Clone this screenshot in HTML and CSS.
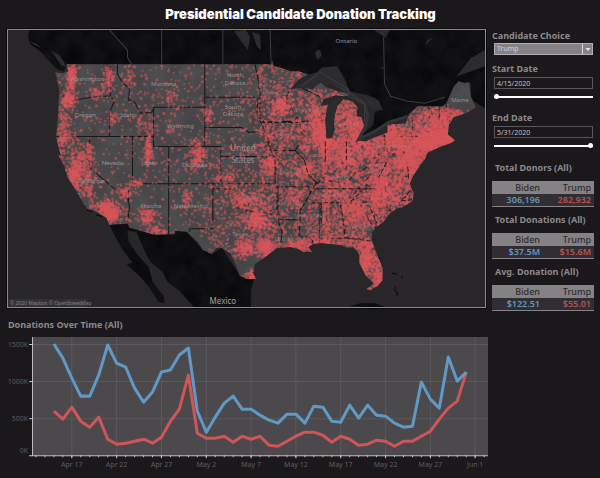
FILE: index.html
```html
<!DOCTYPE html>
<html lang="en">
<head>
<meta charset="utf-8">
<title>Presidential Candidate Donation Tracking</title>
<link rel="stylesheet" href="styles.css">
</head>
<body>
<h1 class="title">Presidential Candidate Donation Tracking</h1>
<main class="dashboard">
  <section class="map-panel" aria-label="Donation map">
    <svg class="map" viewBox="9 31 475 276" role="img" aria-label="Map of donations across the United States">
      <defs>
        <path id="usa" d="M67 65H271L272 61L274 67L282 69L290 72L298 72L308 75L298 81L290 90L302 88L312 90L320 83L326 88L340 93L352 95L344 97L335 96L330 98L323 100L321 107L328 105L325 120L326 133L328 139L332 138L334 130L334 117L337 107L343 100L352 102L357 108L356 117L361 118L364 127L361 137L357 141L365 142L374 138L387 133V125L405 124L408 115L417 107H442L446 103L453 87L458 82L463 84L468 83L470 97L475 108L467 113L453 118L448 125L447 135L452 139L454 141L449 144L440 147L427 153L424 160L418 168L412 177L409 184L413 193L412 201L403 207L396 209L390 213L383 222L375 228L371 233L371 240L376 253L382 268L382 280L377 286L370 290L366 289L373 284L365 275L359 263V255L353 247L347 248L340 245L320 243L313 244L308 247L312 252L303 252L298 249L290 247L277 248L265 257L255 264L253 273L256 279L247 279L240 276L235 263L230 253L222 248H216L212 254L203 250L198 242L192 237L187 232L175 231V234L155 235L130 228L128 224L110 225L107 218L97 212L88 209L83 202L75 188L68 177L65 167L59 155L62 157L59 147L57 137L59 113L60 92L58 81L56 73L64 74L69 72Z"/>
        <clipPath id="us-clip"><use href="#usa"/></clipPath>
        <filter id="terrain" x="0" y="0" width="100%" height="100%">
          <feTurbulence type="fractalNoise" baseFrequency=".06" numOctaves="3" seed="4"/>
          <feColorMatrix values="0 0 0 0 0  0 0 0 0 0  0 0 0 0 0  2 0 0 0 -.7"/>
          <feComposite in2="SourceGraphic" operator="in"/>
        </filter>
        <filter id="soft"><feGaussianBlur stdDeviation=".7"/></filter>
      </defs>
      <rect class="water" x="9" y="31" width="475" height="276"/>
      <g id="foreign">
        <path class="foreign" d="M30 31L29 37L31 45L42 53L52 64L59 71L65 72L67 65H271L290 73L309 75L320 72L337 67L345 83L350 92L368 96L375 99L382 110L374 113L373 125L357 140L374 132L387 122L407 116L417 107H442L447 103L457 82L470 84V100L484 109V31Z"/>
        <path class="foreign" d="M110 225L128 224L155 235H175V231L187 232L203 250L212 254L222 248L240 276L254 279L251 290V307H194L180 291L168 282L163 272L151 262L146 253L142 244L137 232L128 231L129 241L138 255L149 267L153 282L164 296L165 303L159 302L150 288L142 278L127 264L133 263L122 248L115 235ZM349 306L360 303L375 303L385 307Z"/>
      </g>
      <use href="#foreign" filter="url(#terrain)" opacity=".5"/>
      <g class="lake">
        <path d="M52 52Q62 54 67 68L62 66ZM31 43Q37 43 42 49L34 45ZM234 32L244 46L248 51L250 38L246 31ZM252 33L257 48L261 51L260 36ZM374 31L385 39L389 31ZM424 47L432 39L427 41ZM315 53Q321 47 321 57Q317 64 315 55ZM484 51L470 59L448 87L456 77L484 67ZM379 67L384 69L382 70Z"/>
      </g>
      <path class="province" d="M110 31L128 51V58L132 65M162 31V65M223 31V65M270 31L271 65M383 38L384 85L390 97L407 102L424 104L444 98"/>
      <use class="land" href="#usa"/>
      <use href="#usa" filter="url(#terrain)" opacity=".12"/>
      <g clip-path="url(#us-clip)">
        <g class="states">
          <path d="M111 65V97L115 102L110 113V137M118 65V75L122 82L130 90L129 101L134 101L141 114L152 113L155 108M60 95L74 101L98 97H111M57 137H154V147M155 108H206M154 108V147H221V184M205 65V147M205 98H255M205 128H242L249 133L258 132M255 65L258 80L260 95V122L266 133L270 150L275 158V184M90 137V168L129 201L130 208L128 224M133 137V184L129 191V201M133 184H275M169 147V235M213 184V229H190V232M213 189H235V207L243 210L261 213L277 215V186M221 157H262L269 158M260 122H299M258 98L257 112L260 118M277 187H312L309 195L300 211L299 237M278 220H300M278 220L282 233L280 247M299 237H311L313 244M299 122L302 133L300 143L295 151L304 160L308 175L316 183L312 187M266 151H295M290 90L286 98L292 109L299 122M325 140V177L312 188M327 139H355M346 142V168L354 174L346 184L326 181L315 189H394M354 174L365 169L372 159L384 151V135M384 137H420L424 147M372 161L378 165L384 158L397 153M397 153L410 164M386 163L370 184L359 188L350 197L340 203H312M320 203L319 243M340 203L344 230V239L324 238M344 238L370 240M359 203L371 225L379 230M359 203L371 202L387 208L393 214M302 122L326 121M302 89L321 98M407 115L412 120V134M428 107L430 135M439 107L438 128M445 103L449 123M429 130L448 128M428 142L437 136"/>
        </g>
        <g id="dots" class="dots" filter="url(#soft)"></g>
        <path class="borders-front" d="M295 151L304 160L308 175L316 183L300 211V222M365 181L371 174M386 163L378 178M350 202L362 191M407 167L408 179L405 176M409 191L405 197L400 201L411 200M321 204V223M340 205L343 222M370 209L376 223M345 238L370 241M278 190V215M275 160V184M260 123H298M320 189H372M278 220H299M325 142V162M346 142V160"/>
      </g>
      <path class="lake-shore" d="M302 87L320 76L347 92L364 104L367 116L365 127L358 140L374 132L388 123L407 117"/>
      <path class="lake" d="M294 89L310 79L322 68L337 67L346 83L347 91L332 84L325 88L323 82L311 89ZM335 98L327 108L325 121L326 139L332 138L334 118L337 105L343 99ZM352 97L363 98L370 110L382 111L378 101L369 97Z"/>
      <path class="province" d="M301 87L320 73L348 90L348 97L364 105L364 122"/>
      <path class="islands" d="M394 290L397 293L396 296M391 273L396 274M401 276L402 278M395 286L394 290M87 210L93 212M97 215L103 217M378 257L379 259"/>
      <g class="state-names">
        <text x="88" y="82">Washington</text><text x="86" y="118">Oregon</text>
        <text x="129" y="118">Idaho</text><text x="164" y="87">Montana</text>
        <text x="181" y="129">Wyoming</text>
        <text x="235" y="78">North</text><text x="235" y="86">Dakota</text>
        <text x="233" y="110">South</text><text x="233" y="117">Dakota</text>
        <text x="113" y="165">Nevada</text><text x="149" y="165">Utah</text>
        <text x="195" y="167">Colorado</text><text x="92" y="183">California</text>
        <text x="151" y="208">Arizona</text><text x="191" y="208">New Mexico</text>
        <text x="240" y="236">Texas</text>
        <g class="faint">
          <text x="277" y="96">Minnesota</text><text x="307" y="113">Wisconsin</text>
          <text x="282" y="138">Iowa</text><text x="346" y="127">Michigan</text>
          <text x="314" y="157">Illinois</text><text x="289" y="174">Missouri</text>
          <text x="256" y="199">Oklahoma</text><text x="290" y="206">Arkansas</text>
          <text x="309" y="217">Mississippi</text><text x="334" y="197">Tennessee</text>
          <text x="345" y="179">Kentucky</text><text x="358" y="229">Georgia</text>
          <text x="359" y="155">Ohio</text><text x="392" y="149">Pennsylvania</text>
          <text x="376" y="167">West</text><text x="377" y="174">Virginia</text>
          <text x="414" y="128">New York</text><text x="288" y="241">Louisiana</text>
        </g>
        <text x="459" y="103">Maine</text>
      </g>
      <g class="country-names">
        <text class="us" x="243" y="152">United</text><text class="us" x="243" y="163">States</text>
        <text class="ontario" x="346" y="44">Ontario</text><text class="mexico" x="223" y="304">Mexico</text>
      </g>
      <rect class="credit-back" x="9" y="299" width="79" height="8"/>
      <text class="credit" x="11" y="305">© 2020 Mapbox © OpenStreetMap</text>
    </svg>
  </section>

  <aside class="sidebar">
    <form class="filters">
      <div class="field">
        <label for="candidate">Candidate Choice</label>
        <div class="select-wrap">
          <select id="candidate"><option>Trump</option><option>Biden</option></select>
          <svg class="arrow" viewBox="0 0 11 10" aria-hidden="true"><path d="M0.5 0V10" stroke="#d8d6d9"/><path d="M3.5 4H8.5L6 7Z" fill="#e6e4e7"/></svg>
        </div>
      </div>
      <div class="field dated">
        <label for="start">Start Date</label>
        <input class="date" id="start" type="text" value="4/15/2020">
        <input class="slider" type="range" min="0" max="46" value="0" aria-label="Start date slider">
      </div>
      <div class="field dated">
        <label for="end">End Date</label>
        <input class="date" id="end" type="text" value="5/31/2020">
        <input class="slider" type="range" min="0" max="46" value="46" aria-label="End date slider">
      </div>
    </form>
    <section class="totals">
      <table>
        <caption>Total Donors (All)</caption>
        <thead><tr><th>Biden</th><th>Trump</th></tr></thead>
        <tbody><tr><td class="biden">306,196</td><td class="trump">282,932</td></tr></tbody>
      </table>
      <table>
        <caption>Total Donations (All)</caption>
        <thead><tr><th>Biden</th><th>Trump</th></tr></thead>
        <tbody><tr><td class="biden">$37.5M</td><td class="trump">$15.6M</td></tr></tbody>
      </table>
      <table>
        <caption>Avg. Donation (All)</caption>
        <thead><tr><th>Biden</th><th>Trump</th></tr></thead>
        <tbody><tr><td class="biden">$122.51</td><td class="trump">$55.01</td></tr></tbody>
      </table>
    </section>
  </aside>

  <section class="trend">
    <h2>Donations Over Time (All)</h2>
    <svg id="chart" class="chart" viewBox="5 336 483 138" role="img" aria-label="Donations over time">
      <rect class="plot" x="33" y="337" width="454" height="118"/>
    </svg>
  </section>
</main>
<script src="script.js"></script>
</body>
</html>
```
FILE: styles.css
```css
* { box-sizing: border-box; }

body {
  margin: 0;
  padding: 6px 6px 4px 7px;
  background: #1a181b;
  color: #8b898c;
  font-family: "Noto Sans", "Open Sans", sans-serif;
}

.title {
  margin: 0 0 6px;
  color: #fff;
  font: 900 13px/17px Inter, "Open Sans", sans-serif;
  text-align: center;
}

.dashboard {
  display: grid;
  grid-template-columns: minmax(0, 1fr) 102px;
  column-gap: 5px;
}

.map-panel {
  align-self: start;
  border: 1px solid #8b898c;
  outline: 1px solid #0c0b0d;
  margin-right: 1px;
}

.map, .chart { display: block; width: 100%; height: auto; }

.water { fill: #282629; }
.foreign { fill: #111013; }
.lake { fill: #2c2b2e; }
.lake-shore { fill: none; stroke: #343336; stroke-width: 3; }
.province { fill: none; stroke: #3c3b3e; stroke-width: 1; }
.land { fill: #4d4c4e; }
.states { fill: none; stroke: #181719; stroke-width: 1; }
.borders-front { fill: none; stroke: #252021; stroke-width: 1; stroke-dasharray: 5 2; }
.islands { fill: none; stroke: #0b0a0c; stroke-width: 1; }
.dots { fill: #d9565a; }
.state-names { fill: #949294; font-size: 6px; text-anchor: middle; }
.faint { opacity: .45; }
.country-names { text-anchor: middle; }
.us { fill: #989698; opacity: .8; font-size: 8px; }
.ontario { fill: #8f8d90; font-size: 6px; }
.mexico { fill: #a3a1a4; font-size: 8px; }
.credit-back { fill: #333135; }
.credit { fill: #858386; font-size: 5px; }

.field { margin-bottom: 7px; }
.field label {
  display: block;
  font-size: 9px;
  font-weight: 700;
  line-height: 14px;
}
.dated { margin-bottom: 12px; }

.select-wrap { position: relative; margin: 0 1px 0 2px; }
.select-wrap select {
  display: block;
  width: 100%;
  height: 12px;
  padding: 0 14px 0 2px;
  border: 1px solid #b1afb2;
  border-radius: 0;
  appearance: none;
  background: #858286;
  color: #d2d0d3;
  font: 7px/10px "Noto Sans", sans-serif;
}
.arrow { position: absolute; top: 1px; right: 0; width: 11px; height: 10px; pointer-events: none; }

.date {
  display: block;
  width: calc(100% - 3px);
  height: 12px;
  margin: 1px 1px 0 2px;
  padding: 0 2px;
  border: 1px solid #59575a;
  background: #1a181b;
  color: #c4c2c5;
  font: 7px/10px "Noto Sans", sans-serif;
}

.slider {
  display: block;
  width: calc(100% - 3px);
  height: 5px;
  margin: 5px 1px 0 2px;
  appearance: none;
  background: linear-gradient(#fff, #fff) center / 100% 2px no-repeat;
}
.slider::-webkit-slider-thumb {
  appearance: none;
  width: 5px;
  height: 5px;
  border-radius: 50%;
  background: #fff;
}

.totals { display: grid; gap: 6px; margin-top: 13px; }
.totals table { width: 100%; border-collapse: collapse; table-layout: fixed; border-bottom: 1px solid #858386; }
.totals caption { padding: 0 0 6px 3px; font-size: 9px; font-weight: 700; line-height: 14px; text-align: left; white-space: nowrap; }
.totals th, .totals td { padding: 0 3px; text-align: right; }
.totals th { height: 13px; background: #858286; color: #2e2c2f; font-size: 9px; font-weight: 500; line-height: 13px; }
.totals td { height: 12px; background: #302e32; font-size: 9px; font-weight: 600; line-height: 12px; }
.totals .biden { color: #6296bd; }
.totals .trump { color: #bd5053; }

.trend { margin: 7px -2px 0 -2px; }
.trend h2 { margin: 0 0 4px 3px; font-size: 9px; font-weight: 700; line-height: 14px; }
.plot { fill: #4b494c; }
.grid-line { stroke: #5b595c; stroke-width: 1; }
.axis { stroke: #c6c4c7; stroke-width: 1; }
.tick-text { fill: #5f5d60; font-size: 7px; }
.end { text-anchor: end; }
.middle { text-anchor: middle; }
.series { fill: none; stroke-width: 3; stroke-linejoin: round; }
.series.blue { stroke: #5f99c4; }
.series.red { stroke: #d05558; }
```
FILE: script.js
```js
const NS = "http://www.w3.org/2000/svg";

function add(parent, tag, attrs, text) {
  const node = document.createElementNS(NS, tag);
  for (const key in attrs) node.setAttribute(key, attrs[key]);
  if (text) node.textContent = text;
  parent.appendChild(node);
}

// Repeatable random numbers keep the dots in the same place on each load.
let seed = 20200531;
function random() {
  seed = (seed * 1664525 + 1013904223) % 4294967296;
  return seed / 4294967296;
}
function spread() {
  return random() + random() + random() + random() - 2;
}

// Evenly scattered donors: left, top, width, height, count.
const areas = [
  [56, 65, 60, 72, 110], [112, 65, 93, 72, 160], [60, 137, 70, 90, 130],
  [130, 137, 80, 100, 220], [205, 65, 55, 85, 200], [205, 147, 70, 110, 560],
  [258, 65, 45, 75, 450], [260, 120, 70, 130, 1200], [300, 90, 65, 60, 550],
  [323, 138, 62, 108, 1300], [370, 160, 45, 60, 550], [385, 108, 70, 60, 850],
  [355, 240, 30, 45, 120]
];
// Cities: x, y, horizontal spread, vertical spread, count.
const cities = [
  [72, 79, 4, 12, 180], [70, 101, 6, 7, 110], [65, 120, 5, 18, 80], [61, 145, 4, 20, 50],
  [81, 163, 10, 14, 130], [75, 175, 6, 13, 180], [87, 184, 10, 22, 130],
  [107, 211, 12, 9, 300], [112, 217, 7, 8, 90], [68, 140, 9, 10, 60],
  [110, 79, 5, 8, 60], [98, 93, 12, 7, 45], [114, 120, 6, 7, 30], [149, 151, 3, 15, 110],
  [147, 125, 8, 13, 50], [137, 183, 7, 3, 35], [125, 194, 6, 6, 50],
  [148, 216, 8, 7, 100], [157, 231, 8, 5, 50], [198, 156, 6, 12, 130],
  [187, 200, 4, 12, 40], [173, 97, 10, 10, 30], [129, 77, 5, 15, 35],
  [90, 152, 3, 10, 35], [208, 115, 5, 8, 35],
  [282, 107, 9, 8, 150], [256, 221, 10, 9, 200], [246, 247, 8, 9, 150],
  [266, 248, 9, 8, 190], [252, 276, 7, 5, 60], [271, 165, 8, 8, 110],
  [305, 170, 9, 8, 100], [322, 134, 8, 14, 220], [316, 116, 8, 14, 150],
  [347, 118, 13, 18, 260], [358, 130, 8, 12, 180], [335, 151, 18, 14, 220],
  [348, 161, 11, 13, 150], [366, 147, 12, 15, 200], [389, 132, 16, 7, 170],
  [400, 145, 26, 14, 380], [425, 144, 12, 13, 360], [410, 160, 11, 16, 340],
  [438, 132, 14, 16, 420], [448, 141, 9, 6, 140], [429, 119, 14, 14, 120],
  [455, 116, 17, 7, 110], [393, 176, 24, 12, 180], [388, 195, 20, 13, 200],
  [376, 194, 15, 15, 140], [352, 211, 12, 12, 230], [337, 190, 17, 10, 130],
  [360, 244, 15, 6, 70], [367, 257, 8, 13, 190], [378, 268, 5, 16, 130],
  [364, 264, 5, 13, 130], [378, 282, 6, 7, 60], [370, 290, 7, 4, 40],
  [300, 246, 14, 6, 130], [325, 242, 16, 6, 90], [240, 200, 8, 10, 80],
  [254, 200, 10, 8, 90], [227, 181, 8, 8, 50], [293, 194, 11, 10, 60]
];
const dots = document.getElementById("dots");
for (const [x, y, w, h, n] of areas)
  for (let i = 0; i < n; i++)
    add(dots, "circle", { cx: (x + random() * w).toFixed(1), cy: (y + random() * h).toFixed(1), r: random() > .7 ? 1.6 : 1.1, opacity: ".5" });
for (const [x, y, w, h, n] of cities)
  for (let i = 0; i < n; i++)
    add(dots, "circle", { cx: (x + spread() * w).toFixed(1), cy: (y + spread() * h).toFixed(1), r: 1.4, opacity: ".45" });

// Line chart: one value per day from April 15, as heights on the plot.
const blue = [344,358,378,396,396,375,345,363,367,388,402,392,372,370,355,348,411,432,417,403,396,409,409,415,420,423,414,414,423,406,407,421,422,405,418,405,415,416,423,427,426,382,399,408,357,381,372];
const red = [411,419,407,421,427,417,439,444,443,441,439,443,437,421,409,375,433,438,438,436,442,436,439,436,445,446,441,436,432,432,435,442,436,439,445,444,440,441,446,441,441,436,431,419,408,401,372];
const chart = document.getElementById("chart");
const dayX = day => 53.8 + day * 8.945;

[["1500K", 344.5], ["1000K", 381.5], ["500K", 418.5]].forEach(([name, y]) => {
  add(chart, "path", { class: "grid-line", d: `M33 ${y}H487` });
  add(chart, "path", { class: "axis", d: `M29 ${y}H33` });
  add(chart, "text", { class: "tick-text end", x: 28, y: y + 2.5 }, name);
});
add(chart, "text", { class: "tick-text end", x: 28, y: 453 }, "0K");

["Apr 17", "Apr 22", "Apr 27", "May 2", "May 7", "May 12", "May 17", "May 22", "May 27", "Jun 1"].forEach((name, i) => {
  const x = dayX(2 + i * 5).toFixed(1);
  add(chart, "path", { class: "grid-line", d: `M${x} 337V455` });
  add(chart, "path", { class: "axis", d: `M${x} 455V458` });
  add(chart, "text", { class: "tick-text middle", x, y: 467 }, name);
});
for (let day = -2; day < 49; day++)
  add(chart, "path", { class: "axis", d: `M${dayX(day).toFixed(1)} 455V457` });
add(chart, "path", { class: "axis", fill: "none", d: "M32.5 337V455.5H487M29 455.5H33" });

const points = list => list.map((y, day) => `${dayX(day).toFixed(1)},${y}`).join(" ");
add(chart, "polyline", { class: "series red", points: points(red) });
add(chart, "polyline", { class: "series blue", points: points(blue) });
```
